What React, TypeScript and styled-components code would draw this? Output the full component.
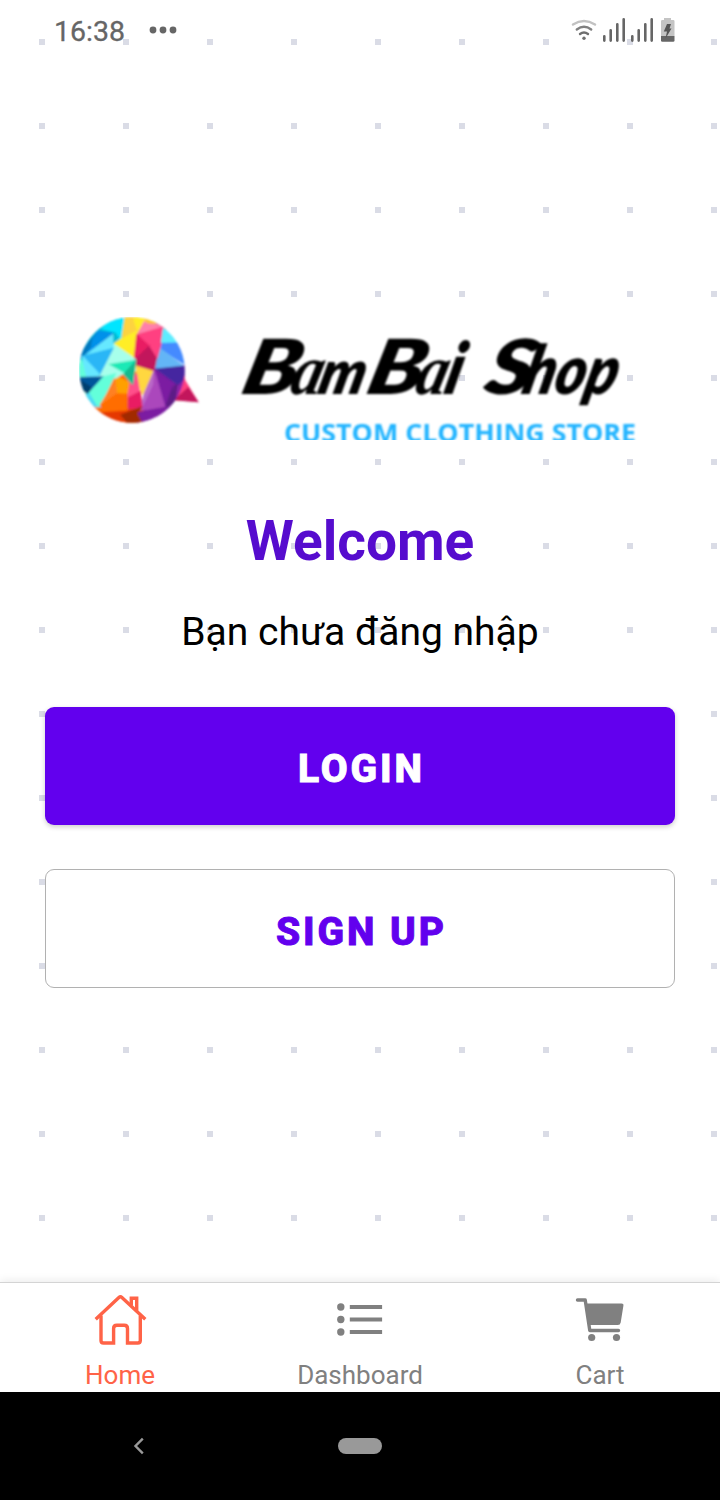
import React from "react";
import styled, { createGlobalStyle } from "styled-components";

const GlobalStyle = createGlobalStyle`
  * { box-sizing: border-box; }
  body { margin: 0; background: #fff; font-family: Roboto, sans-serif; }
  svg { display: block; }
`;

const Screen = styled.div`
  width: 720px;
  height: 1500px;
  display: flex;
  flex-direction: column;
  overflow: hidden;
`;

const Main = styled.main`
  flex: 1;
  display: flex;
  flex-direction: column;
  background-color: #fff;
  background-image: url("data:image/svg+xml,%3Csvg xmlns='http://www.w3.org/2000/svg' width='84' height='84'%3E%3Crect x='39' y='39' width='6' height='6' fill='%23dadce6'/%3E%3C/svg%3E");
  background-size: 84px 84px;
`;

const StatusBar = styled.header`
  height: 60px;
  padding: 0 45px 0 54px;
  display: flex;
  justify-content: space-between;
  align-items: center;
  color: #666;
`;

const StatusGroup = styled.div`
  display: flex;
  align-items: center;
  gap: 24px;
`;

const Clock = styled.span`
  padding-top: 3px;
  font-size: 28.5px;
  line-height: 34px;
  font-weight: 400;
  -webkit-text-stroke: 0.3px #666;
  white-space: nowrap;
`;

const Content = styled.section`
  display: flex;
  flex-direction: column;
  align-items: center;
  padding: 257px 45px 0;
`;

const LogoFrame = styled.div`
  width: 562px;
  height: 123px;
`;

const Title = styled.h1`
  margin: 68px 0 0;
  font-size: 55px;
  line-height: 66px;
  font-weight: 700;
  color: #560cce;
`;

const Subtitle = styled.p`
  margin: 35px 0 0;
  font-size: 39px;
  line-height: 46px;
  color: #000;
`;

const Button = styled.button<{ $outlined?: boolean }>`
  width: 630px;
  height: ${(p) => (p.$outlined ? 119 : 118)}px;
  margin: ${(p) => (p.$outlined ? 44 : 52)}px 0 0;
  padding: ${(p) => (p.$outlined ? 7 : 5)}px 0 0 3px;
  border-radius: 9px;
  border: ${(p) => (p.$outlined ? "1px solid #b1b1b1" : "none")};
  background: ${(p) => (p.$outlined ? "#fff" : "#6200ee")};
  color: ${(p) => (p.$outlined ? "#6200ee" : "#fff")};
  box-shadow: ${(p) => (p.$outlined ? "none" : "0 2px 5px rgba(0, 0, 0, 0.2)")};
  font-family: Roboto, sans-serif;
  font-size: 39px;
  line-height: 46px;
  font-weight: 800;
  letter-spacing: 2.9px;
  -webkit-text-stroke: 0.9px currentColor;
`;

const TabBar = styled.nav`
  height: 110px;
  display: flex;
  background: #fff;
  border-top: 1px solid #d4d4d4;
  box-shadow: 0 -1px 9px rgba(0, 0, 0, 0.09);
`;

const Tab = styled.a<{ $active?: boolean }>`
  flex: 1;
  display: flex;
  flex-direction: column;
  align-items: center;
  padding-top: 7px;
  color: ${(p) => (p.$active ? "#ff6347" : "#808080")};
`;

const TabLabel = styled.span`
  margin-top: 10px;
  font-size: 26px;
  line-height: 30px;
`;

const SystemNav = styled.footer`
  height: 108px;
  display: grid;
  grid-template-columns: 278px 164px 278px;
  align-items: center;
  justify-items: center;
  background: #000;
`;

const HomePill = styled.div`
  width: 44px;
  height: 16px;
  border-radius: 8px;
  background: #999;
`;

const FACETS: [string, string][] = [
  ["#0288d1", "20,160 45,125 80,80 130,78 130,130"],
  ["#0091ea", "62,115 90,70 132,82 110,98 50,150"],
  ["#0277bd", "28,150 65,98 62,125 42,152"],
  ["#00bcd4", "85,75 125,55 155,116 122,104 132,82"],
  ["#00e5ff", "95,72 130,30 170,30 155,112 138,82"],
  ["#fdd340", "166,30 212,30 196,78 155,98"],
  ["#ffee26", "200,30 265,52 222,58 204,80 191,162 130,117 158,98"],
  ["#fdd340", "166,30 184,30 200,76 158,98"],
  ["#ff80ab", "202,88 222,50 250,55 282,66"],
  ["#fcc331", "212,30 258,40 258,56 232,54"],
  ["#ff4081", "200,90 282,65 274,116 260,162 236,122"],
  ["#e91e63", "200,88 238,122 192,166"],
  ["#c2185b", "192,166 240,120 264,156 252,196 197,184"],
  ["#5fecff", "280,68 335,116 273,116"],
  ["#448aff", "273,115 335,113 350,182 266,130"],
  ["#64b5f6", "268,128 342,183 256,192"],
  ["#ff4081", "238,122 274,114 262,160"],
  ["#4527a0", "256,192 342,183 346,220 322,242"],
  ["#7b1fa2", "255,192 322,241 312,252 280,258"],
  ["#5e1f86", "322,238 312,320 278,262"],
  ["#7b1fa2", "252,195 312,248 285,312 270,305"],
  ["#5e1f86", "308,245 312,310 284,312"],
  ["#ba68c8", "250,195 255,245 214,316 222,262"],
  ["#ab47bc", "254,198 286,308 214,316 250,240"],
  ["#7b1fa2", "203,322 320,300 270,355 200,360"],
  ["#ffd740", "197,182 249,198 218,270 205,238"],
  ["#ff4f8b", "174,226 200,205 212,274 172,280"],
  ["#e91e63", "174,278 212,258 216,308 168,312"],
  ["#e53900", "80,308 174,310 155,345 190,362 110,345"],
  ["#a12a00", "152,330 216,305 202,326 220,360 178,360"],
  ["#ff6d00", "75,310 116,258 172,262 172,316 95,320"],
  ["#ff8022", "134,212 144,262 78,308 108,268"],
  ["#ffa000", "136,212 178,232 172,265 142,264"],
  ["#1de9b6", "106,177 198,165 188,238 160,208"],
  ["#14b98d", "196,168 188,238 160,208"],
  ["#a7ffeb", "130,116 197,163 108,178"],
  ["#a7ffeb", "108,174 162,205 136,220 78,212"],
  ["#66e8ff", "44,152 128,88 130,128 110,142"],
  ["#29b6f6", "38,153 130,130 88,212"],
  ["#66e8ff", "38,153 88,206 80,216 40,216"],
  ["#64ffda", "20,164 36,166 48,217 20,217"],
  ["#01579b", "26,217 102,215 62,270"],
  ["#003f70", "30,225 62,245 60,275 34,250"],
  ["#4dd9f5", "48,270 60,262 92,306 70,305"],
  ["#64ffda", "100,215 138,205 106,270 84,306 58,262"],
];

// Sections of the globe that sit underneath the facets.
const SECTORS: [string, string][] = [
  ["#00bcd4", "20,30 160,30 150,130 90,210 20,220"],
  ["#c2185b", "200,40 290,60 270,205 190,190"],
  ["#a7ffeb", "90,110 200,165 190,235 40,290 40,210"],
  ["#ff6d00", "130,200 200,200 200,290 120,280"],
  ["#8e24aa", "255,190 350,180 320,340 200,330"],
  ["#e53900", "70,300 220,300 220,370 90,360"],
];

const LETTER_FONT = "Lato, sans-serif";
const SCRIPT_FONT = "'Liberation Serif', serif";

type Glyphs = { text: string; x: number; width: number; size: number; font: string };

const WORDMARK: Glyphs[] = [
  { text: "B", x: 239, width: 56, size: 76, font: LETTER_FONT },
  { text: "a", x: 288, width: 31, size: 72, font: SCRIPT_FONT },
  { text: "m", x: 316, width: 46, size: 62, font: LETTER_FONT },
  { text: "B", x: 364, width: 56, size: 76, font: LETTER_FONT },
  { text: "a", x: 413, width: 31, size: 72, font: SCRIPT_FONT },
  { text: "i", x: 442, width: 16, size: 72, font: LETTER_FONT },
  { text: "S", x: 482, width: 47, size: 76, font: LETTER_FONT },
  { text: "hop", x: 520, width: 94, size: 68, font: LETTER_FONT },
];

function Logo() {
  return (
    <svg width="562" height="123" viewBox="79 317 562 123" role="img" aria-label="BamBai Shop">
      <defs>
        <clipPath id="globe">
          <circle cx="186" cy="195" r="158" />
        </clipPath>
        <filter id="soft" x="-5%" y="-5%" width="110%" height="110%">
          <feGaussianBlur stdDeviation="0.8" />
        </filter>
      </defs>
      <g filter="url(#soft)">
        <g transform="translate(70 305) scale(0.33333)">
          <path d="M338 180 346 226 386 292 310 285 322 240Z" fill="#ff4081" />
          <path d="M355 246 386 292 310 286Z" fill="#c2185b" />
          <g clipPath="url(#globe)">
            {[...SECTORS, ...FACETS].map(([fill, points], i) => (
              <polygon key={i} points={points} fill={fill} stroke={fill} strokeWidth="2" />
            ))}
          </g>
        </g>
        <g transform="translate(0 394) skewX(-14)" fontWeight="800" fontStyle="italic" fill="#000">
          {WORDMARK.map(({ text, x, width, size, font }) => (
            <text
              key={x}
              x={x}
              y="0"
              fontFamily={font}
              fontSize={size}
              textLength={width}
              lengthAdjust="spacingAndGlyphs"
            >
              {text}
            </text>
          ))}
        </g>
        <text
          x="284"
          y="441.5"
          fontFamily="'Open Sans', sans-serif"
          fontWeight="700"
          fontSize="24.5"
          fill="#20b4ff"
          textLength="352"
          lengthAdjust="spacingAndGlyphs"
        >
          CUSTOM CLOTHING STORE
        </text>
      </g>
    </svg>
  );
}

function MoreDots() {
  return (
    <svg width="28" height="8" viewBox="0 0 28 8" fill="#666">
      <circle cx="4" cy="4" r="3.4" />
      <circle cx="14" cy="4" r="3.4" />
      <circle cx="24" cy="4" r="3.4" />
    </svg>
  );
}

function StatusIcons() {
  return (
    <svg width="105" height="26" viewBox="570 17 105 26" fill="none" strokeLinecap="round">
      <path d="M573 24.5Q584 17.5 595 24.5" stroke="#c2c2c2" strokeWidth="2.4" />
      <path d="M576.8 29.5Q584 24 591.2 29.5" stroke="#808080" strokeWidth="2.4" />
      <path d="M580 34Q584 30.8 588 34" stroke="#707070" strokeWidth="2.4" />
      <circle cx="584" cy="38.3" r="1.7" fill="#707070" />
      <path
        d="M604.3 36.3V40.6M610.7 30.3V40.6M617.3 24.3V40.6M623.7 19.3V40.6M632.3 36.3V40.6M638.7 30.3V40.6M645.3 24.3V40.6M651.7 19.3V40.6"
        stroke="#666"
        strokeWidth="2.6"
      />
      <path d="M664 18h7v2h2.2q1.3 0 1.3 1.3V36H661V21.3q0-1.3 1.3-1.3H664Z" fill="#c4c4c4" />
      <path d="M661 36h13.5v4.5q0 1.3-1.3 1.3H662.3q-1.3 0-1.3-1.3Z" fill="#666" />
      <path d="M667 24h4l-1.5 4.5h2L665.5 38.5 667 31.5h-3.2Z" fill="#555" />
    </svg>
  );
}

function HomeIcon() {
  return (
    <svg width="60" height="60" viewBox="90 1290 60 60" fill="none" stroke="currentColor" strokeWidth="3.4">
      <path d="M95.7 1319.2 118.9 1297.5Q120.4 1296.1 121.9 1297.5L145.3 1319.2" />
      <path d="M101 1315.5V1340.5Q101 1343 103.5 1343H113.6V1328.5Q113.6 1325.3 116.8 1325.3H124.3Q127.5 1325.3 127.5 1328.5V1343H137.8Q140.3 1343 140.3 1340.5V1315.5" />
      <path d="M131.3 1305.5V1298.2H136.7V1310.5" />
    </svg>
  );
}

function ListIcon() {
  return (
    <svg width="60" height="60" viewBox="330 1290 60 60" fill="currentColor">
      {[1307, 1319.5, 1332].map((y) => (
        <g key={y}>
          <circle cx="340.8" cy={y} r="3.7" />
          <rect x="349.8" y={y - 2} width="32.3" height="4" />
        </g>
      ))}
    </svg>
  );
}

function CartIcon() {
  return (
    <svg width="60" height="60" viewBox="570 1290 60 60" fill="none" stroke="currentColor">
      <path d="M577.5 1300H585.2L589.8 1330.5H618.5" strokeWidth="3.4" strokeLinecap="round" strokeLinejoin="round" />
      <path d="M586.3 1303.5H621.5Q623.8 1303.5 623.4 1305.8L620.7 1322.5Q620.3 1325 617.8 1325H589.5Z" fill="currentColor" stroke="none" />
      <circle cx="591.7" cy="1337.5" r="3.6" fill="currentColor" stroke="none" />
      <circle cx="616.5" cy="1337.5" r="3.6" fill="currentColor" stroke="none" />
    </svg>
  );
}

function BackIcon() {
  return (
    <svg width="12" height="18" viewBox="0 0 12 18" fill="none" stroke="#999" strokeWidth="2.4">
      <path d="M9.8 1.7 2.5 9 9.8 16.3" />
    </svg>
  );
}

export default function App() {
  return (
    <Screen>
      <GlobalStyle />
      <Main>
        <StatusBar>
          <StatusGroup>
            <Clock>16:38</Clock>
            <MoreDots />
          </StatusGroup>
          <StatusIcons />
        </StatusBar>
        <Content>
          <LogoFrame>
            <Logo />
          </LogoFrame>
          <Title>Welcome</Title>
          <Subtitle>Bạn chưa đăng nhập</Subtitle>
          <Button>LOGIN</Button>
          <Button $outlined>SIGN UP</Button>
        </Content>
      </Main>
      <TabBar>
        <Tab $active>
          <HomeIcon />
          <TabLabel>Home</TabLabel>
        </Tab>
        <Tab>
          <ListIcon />
          <TabLabel>Dashboard</TabLabel>
        </Tab>
        <Tab>
          <CartIcon />
          <TabLabel>Cart</TabLabel>
        </Tab>
      </TabBar>
      <SystemNav>
        <BackIcon />
        <HomePill />
      </SystemNav>
    </Screen>
  );
}
